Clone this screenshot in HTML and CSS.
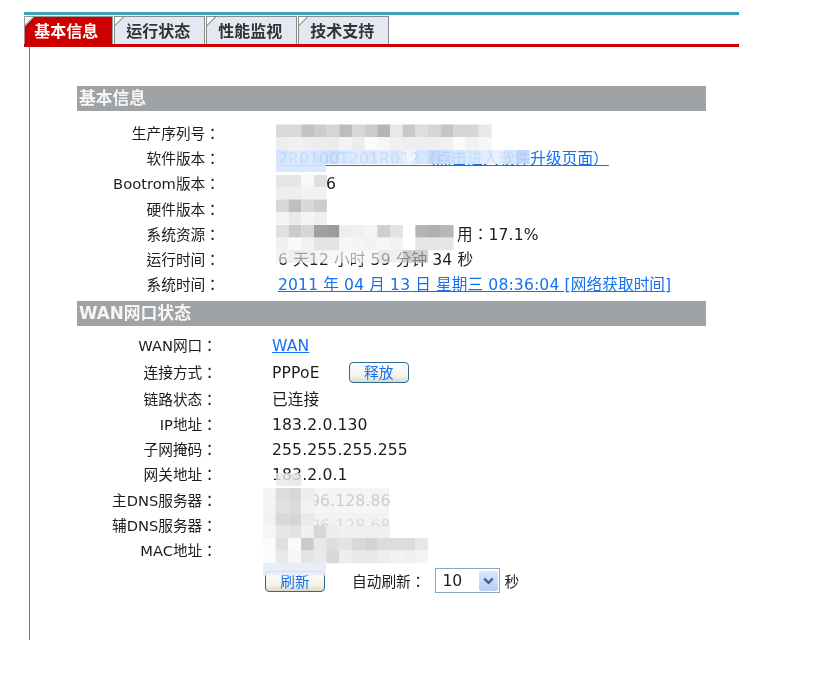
FILE: index.html
```html
<!DOCTYPE html>
<html lang="zh-CN">
  <head>
    <meta charset="UTF-8" />
    <title>基本信息</title>
    <link rel="stylesheet" href="styles.css">
  </head>
  <body>
    <div class="page">
      <div class="top-line"></div>
      <div class="tabs">
        <div class="tab active">基本信息</div>
        <div class="tab">运行状态</div>
        <div class="tab">性能监视</div>
        <div class="tab">技术支持</div>
      </div>
      <div class="content">
        <h3 class="section-title">基本信息</h3>
        <div class="info first">
          <div class="row"><span class="label">生产序列号：</span><span class="value"></span></div>
          <div class="row"><span class="label">软件版本：</span><span class="value"><a href="#">2R0100T201R012（点击进入软件升级页面）</a></span></div>
          <div class="row"><span class="label">Bootrom版本：</span><span class="value pad-boot">6</span></div>
          <div class="row"><span class="label">硬件版本：</span><span class="value"></span></div>
          <div class="row"><span class="label">系统资源：</span><span class="value pad-res">用：17.1%</span></div>
          <div class="row"><span class="label">运行时间：</span><span class="value">6 天12 小时 59 分钟 34 秒</span></div>
          <div class="row"><span class="label">系统时间：</span><span class="value"><a href="#">2011 年 04 月 13 日 星期三 08:36:04 [网络获取时间]</a></span></div>
        </div>

        <h3 class="section-title">WAN网口状态</h3>
        <div class="info second">
          <div class="row"><span class="label">WAN网口：</span><span class="value"><a href="#">WAN</a></span></div>
          <div class="row tall"><span class="label">连接方式：</span><span class="value">PPPoE</span><button class="btn release">释放</button></div>
          <div class="row"><span class="label">链路状态：</span><span class="value">已连接</span></div>
          <div class="row"><span class="label">IP地址：</span><span class="value">183.2.0.130</span></div>
          <div class="row"><span class="label">子网掩码：</span><span class="value">255.255.255.255</span></div>
          <div class="row"><span class="label">网关地址：</span><span class="value">183.2.0.1</span></div>
          <div class="row"><span class="label">主DNS服务器：</span><span class="value pad-dns">96.128.86</span></div>
          <div class="row"><span class="label">辅DNS服务器：</span><span class="value pad-dns">96.128.68</span></div>
          <div class="row"><span class="label">MAC地址：</span><span class="value pad-mac">1</span></div>
        </div>

        <div class="refresh-row">
          <button class="btn refresh">刷新</button>
          <span class="auto-text">自动刷新：</span>
          <div class="combo">
            <span class="combo-text">10</span>
            <span class="combo-arrow">
              <svg width="11" height="8" viewBox="0 0 11 8"><path d="M1.2 1.5 L5.5 5.8 L9.8 1.5" fill="none" stroke="#3d5f94" stroke-width="2.4" /></svg>
            </span>
          </div>
          <span class="sec-text">秒</span>
        </div>
      </div>

      <!-- mosaic over the hidden values -->
      <svg class="mosaic" id="mosaic" width="823" height="680"></svg>
    </div>

    <script>
      const cell = 12.67;
      const svg = document.getElementById("mosaic");

      // x, y, opacity, grey per cell ("." = skip)
      const blocks = [
        [276, 124.5, 1, "d9 d9 c2 cc d6 bd d8 cc b5 e8 c8 de d6 c6 d6 d6 e8"],
        [276, 137, 1, "ed f0 ee ec ec f3 ec fb f6 f0 ee ee ee f0 fa f2 f6"],
        [276, 175, 1, "e6 e6 f8 e0"],
        [276, 187, 1, "ee ee f2 f2"],
        [276, 199.5, 1, "d8 bf d8 cd"],
        [276, 212, 1, "f4 ea f4 ef"],
        [276, 225, 1, "e0 cb d6 a0 9c ee f0 f4 cf e2 . b4 b0 b8"],
        [276, 237.5, 1, "f0 fa f2 e4 e4 f6 f4 f2 f6 f2 . e6 e6 e6"],
        [276, 250, 0.65, "ee e6 e8 f0 f4 f4 f4 f4 e0 e8 b8 b8"],
        [276, 473, 0.8, "e8 e4"],
        [263, 488, 1, "f4 dc d8 ee"],
        [263, 500.5, 1, "f4 e0 dc f2"],
        [263, 513, 1, "f2 d8 d6 ea"],
        [263, 525.5, 1, "f6 e6 e2 f0 d6 ee f0 f0 f0 f0"],
        [263, 538, 1, "fb e0 fa ca e8 de e4 d8 d4 dc dc dc e8"],
        [263, 550.5, 1, "fb e8 f6 e4 ea d8 ee e8 e8 ee f2 f0 f4"]
      ];

      blocks.forEach(function (b) {
        b[3].split(" ").forEach(function (c, i) {
          if (c === ".") return;
          addRect(b[0] + i * cell, b[1], "#" + c + c + c, b[2], 12.8);
        });
      });

      // half-transparent strips where faint text still shows through
      addRect(314, 488, "#eeeeee", 0.6, 25, 75);
      addRect(314, 513, "#eeeeee", 0.78, 12.5, 75);

      // blue strip over the software version link
      const blue = "cfe2fc dbe9fd d6e6fd cfe1fc c6dcfc d6e6fd dbe9fd d6e6fd dbe9fd d6e6fd ecf3fe d0e2fc bcd6fb c6dcfc d0e2fc d8e8fd dfecfe e6f0fe cfe2fc bcd6fb";
      blue.split(" ").forEach(function (c, i) {
        addRect(276 + i * cell, 150, "#" + c, 0.9, 14);
      });
      addRect(276, 163, "#d6e6fd", 0.9, 9, 50);

      // faded blue over the refresh button top
      addRect(263, 563, "#e4ecf7", 0.9, 12.5, 63);

      function addRect(x, y, fill, opacity, h, w) {
        const r = document.createElementNS("http://www.w3.org/2000/svg", "rect");
        r.setAttribute("x", x);
        r.setAttribute("y", y);
        r.setAttribute("width", w || cell + 0.2);
        r.setAttribute("height", h);
        r.setAttribute("fill", fill);
        r.setAttribute("opacity", opacity);
        svg.appendChild(r);
      }
    </script>
  </body>
</html>
```

FILE: styles.css
```css
body {
  margin: 0;
  background: #fff;
  font-family: "DejaVu Sans", "Noto Sans CJK TC", sans-serif;
  font-feature-settings: "locl" 0;
  font-size: 14.7px;
  color: #1c1c1c;
}
.page {
  position: relative;
  width: 823px;
  height: 680px;
  padding: 12px 0 0 24px;
  box-sizing: border-box;
  filter: blur(0.45px);
  overflow: hidden;
}
.top-line {
  width: 715px;
  height: 2.5px;
  background: #3aa3b5;
}
.tabs {
  display: flex;
  gap: 1.5px;
  width: 715px;
  height: 27.5px;
  margin-top: 1.5px;
  border-bottom: 3.5px solid #cc0000;
}
.tab {
  width: 90.5px;
  height: 27.5px;
  padding-right: 2px;
  box-sizing: border-box;
  border: 1px solid #8a8a8a;
  border-bottom: none;
  background: linear-gradient(135deg, #fff 5.5px, #a8a8a8 5.5px, #a8a8a8 6.8px, transparent 6.8px), #e2e9f3;
  text-align: center;
  line-height: 29px;
  font-size: 16px;
  font-weight: bold;
  color: #333;
}
.tab.active {
  width: 88.5px;
  padding-right: 4px;
  border-color: #999;
  background: linear-gradient(135deg, #fff 5.5px, #a8a8a8 5.5px, #a8a8a8 6.8px, transparent 6.8px), #cc0000;
  color: #fff;
}
.content {
  width: 662px;
  height: 593px;
  margin-left: 5px;
  padding: 39px 0 0 47px;
  box-sizing: border-box;
  border-left: 1.5px solid #777;
}
.section-title {
  width: 629px;
  height: 25.3px;
  margin: 0;
  padding-left: 2px;
  box-sizing: border-box;
  background: #a0a3a5;
  color: #f6f6f6;
  font-size: 16.8px;
  font-weight: bold;
  line-height: 25px;
}
.info.first {
  padding-top: 10.5px;
  padding-bottom: 4px;
}
.info.second {
  padding-top: 6.5px;
}
.row {
  display: flex;
  align-items: baseline;
  height: 25.1px;
  line-height: 25px;
}
.second .row {
  height: 25.3px;
}
.second .row.tall {
  height: 28.5px;
  line-height: 29px;
}
.label {
  flex-shrink: 0;
  text-align: right;
}
.first .label {
  width: 143px;
}
.second .label {
  width: 140px;
}
.value {
  font-size: 15.6px;
  letter-spacing: 0.13px;
}
.first .value {
  margin-left: 58px;
}
.second .value {
  margin-left: 55px;
}
.pad-boot {
  padding-left: 48px;
}
.pad-res {
  padding-left: 179px;
}
.pad-dns {
  padding-left: 38px;
  color: #999;
}
.pad-mac {
  padding-left: 147px;
  color: #999;
}
a {
  color: #1571f0;
  text-decoration: underline;
}
.btn {
  padding: 0;
  box-sizing: border-box;
  border: 1.5px solid #2f6a8f;
  border-radius: 4px;
  background: linear-gradient(#fff, #f3f1e8 70%, #dcd9c8);
  color: #1571f0;
  font-family: inherit;
  font-size: 14.7px;
  text-align: center;
}
.btn.release {
  width: 60px;
  height: 21px;
  margin-top: 1px;
  margin-left: 29px;
  line-height: 18px;
  align-self: center;
}
.refresh-row {
  display: flex;
  align-items: center;
  height: 25px;
  margin-top: 4.5px;
  padding-left: 188px;
}
.btn.refresh {
  width: 60px;
  height: 21px;
  margin-top: 2px;
  line-height: 18px;
}
.auto-text {
  margin-left: 27px;
}
.combo {
  display: flex;
  align-items: center;
  justify-content: space-between;
  width: 65px;
  height: 25px;
  margin-left: 10px;
  box-sizing: border-box;
  border: 1.5px solid #8aa6c4;
  padding: 1px;
}
.combo-text {
  padding-left: 5px;
  font-size: 15.6px;
}
.combo-arrow {
  display: flex;
  align-items: center;
  justify-content: center;
  width: 19px;
  height: 20px;
  border-radius: 2px;
  background: linear-gradient(#dbe6fb, #b9cdf5);
}
.sec-text {
  margin-left: 4px;
}
.mosaic {
  position: absolute;
  left: 0;
  top: 0;
}
```
